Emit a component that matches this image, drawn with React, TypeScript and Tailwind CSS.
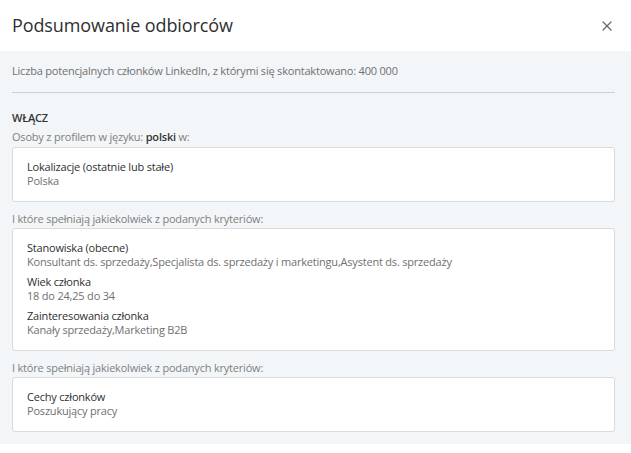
import { X } from "lucide-react";

type Item = { title: string; value: string };

const font = { fontFamily: '"Open Sans", "Noto Sans", sans-serif' };

function CriteriaBox({ items }: { items: Item[] }) {
  return (
    <div className="flex flex-col gap-[6px] rounded-[3px] border border-[#dadada] bg-white px-[14px] pt-[12px] pb-[13px]">
      {items.map((it) => (
        <div key={it.title} className="leading-[14px]">
          <div className="text-[#2f2f2f]">{it.title}</div>
          <div className="text-[#707070]">{it.value}</div>
        </div>
      ))}
    </div>
  );
}

function Label({ children }: { children: React.ReactNode }) {
  return <p className="mt-[9px] mb-[1px] leading-[16px] text-[#808080]">{children}</p>;
}

export default function App() {
  return (
    <div className="h-[453px] w-[631px] bg-white text-[11px] tracking-[-0.2px]" style={font}>
      <header className="flex h-[51px] items-center justify-between pl-[12px] pr-[16px]">
        <h1 className="text-[18px] tracking-[-0.1px] text-[#2f2f2f]">Podsumowanie odbiorców</h1>
        <X className="h-[16px] w-[16px] text-[#666]" strokeWidth={1.8} />
      </header>

      <section className="bg-[#f3f6f8] pt-[12px] pb-[12px] pl-[12px] pr-[16px]">
        <p className="leading-[16px] text-[#707070]">
          Liczba potencjalnych członków LinkedIn, z którymi się skontaktowano: 400 000
        </p>
        <div className="mt-[13px] h-px bg-[#cfcfcf]" />

        <p className="mt-[17px] font-semibold leading-[16px] text-[#333]">WŁĄCZ</p>
        <p className="mt-[3px] mb-[2px] leading-[16px] text-[#808080]">
          Osoby z profilem w języku: <span className="font-semibold text-[#333]">polski</span> w:
        </p>
        <CriteriaBox items={[{ title: "Lokalizacje (ostatnie lub stałe)", value: "Polska" }]} />

        <Label>I które spełniają jakiekolwiek z podanych kryteriów:</Label>
        <CriteriaBox
          items={[
            {
              title: "Stanowiska (obecne)",
              value: "Konsultant ds. sprzedaży,Specjalista ds. sprzedaży i marketingu,Asystent ds. sprzedaży",
            },
            { title: "Wiek członka", value: "18 do 24,25 do 34" },
            { title: "Zainteresowania członka", value: "Kanały sprzedaży,Marketing B2B" },
          ]}
        />

        <Label>I które spełniają jakiekolwiek z podanych kryteriów:</Label>
        <CriteriaBox items={[{ title: "Cechy członków", value: "Poszukujący pracy" }]} />
      </section>
    </div>
  );
}
